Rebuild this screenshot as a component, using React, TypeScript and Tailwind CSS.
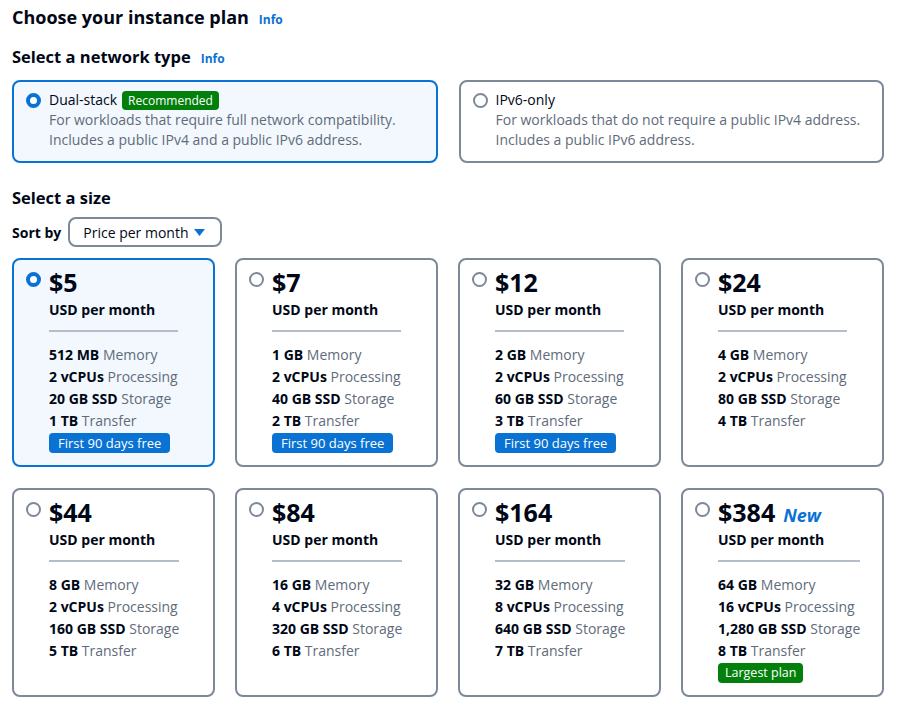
import React from "react";

type Plan = {
  price: string;
  mem: [string, string];
  cpu: string;
  ssd: string;
  tb: string;
  badge?: "free" | "largest";
  isNew?: boolean;
  selected?: boolean;
};

const plans: Plan[] = [
  { price: "$5", mem: ["512 MB", "Memory"], cpu: "2 vCPUs", ssd: "20 GB SSD", tb: "1 TB", badge: "free", selected: true },
  { price: "$7", mem: ["1 GB", "Memory"], cpu: "2 vCPUs", ssd: "40 GB SSD", tb: "2 TB", badge: "free" },
  { price: "$12", mem: ["2 GB", "Memory"], cpu: "2 vCPUs", ssd: "60 GB SSD", tb: "3 TB", badge: "free" },
  { price: "$24", mem: ["4 GB", "Memory"], cpu: "2 vCPUs", ssd: "80 GB SSD", tb: "4 TB" },
  { price: "$44", mem: ["8 GB", "Memory"], cpu: "2 vCPUs", ssd: "160 GB SSD", tb: "5 TB" },
  { price: "$84", mem: ["16 GB", "Memory"], cpu: "4 vCPUs", ssd: "320 GB SSD", tb: "6 TB" },
  { price: "$164", mem: ["32 GB", "Memory"], cpu: "8 vCPUs", ssd: "640 GB SSD", tb: "7 TB" },
  { price: "$384", mem: ["64 GB", "Memory"], cpu: "16 vCPUs", ssd: "1,280 GB SSD", tb: "8 TB", badge: "largest", isNew: true },
];

function Radio({ on }: { on?: boolean }) {
  return on ? (
    <span className="block w-[15px] h-[15px] rounded-full border-[4.5px] border-[#0972d3] bg-white shrink-0" />
  ) : (
    <span className="block w-[15px] h-[15px] rounded-full border-2 border-[#7d8998] bg-white shrink-0" />
  );
}

function Spec({ b, l }: { b: string; l: string }) {
  return (
    <div className="leading-[22px] whitespace-nowrap">
      <span className="font-bold text-[#000716]">{b}</span>{" "}
      <span className="text-[#5f6b7a]">{l}</span>
    </div>
  );
}

function PlanCard({ p }: { p: Plan }) {
  return (
    <div
      className={
        "flex gap-[8px] rounded-[8px] border-2 pl-[12px] pr-[10px] pt-[10px] pb-[12px] " +
        (p.selected ? "border-[#0972d3] bg-[#f2f8fd]" : "border-[#7d8998] bg-white")
      }
    >
      <div className="pt-[2px]">
        <Radio on={p.selected} />
      </div>
      <div className="inline-flex flex-col items-start">
        <div className="flex items-baseline gap-[8px] h-[28px] leading-[28px] -mt-[2px]">
          <span className="text-[25px] font-bold text-[#000716]">{p.price}</span>
          {p.isNew && <span className="text-[18px] font-bold italic text-[#0972d3] leading-[28px]">New</span>}
        </div>
        <div className="mt-[4px] text-[14px] font-bold leading-[20px] text-[#000716]">USD per month</div>
        <div className="self-stretch mt-[10px] h-[2px] bg-[#b4bdc9]" />
        <div className="mt-[12px] text-[14px]">
          <Spec b={p.mem[0]} l={p.mem[1]} />
          <Spec b={p.cpu} l="Processing" />
          <Spec b={p.ssd} l="Storage" />
          <Spec b={p.tb} l="Transfer" />
        </div>
        {p.badge === "free" && (
          <span className="mt-[1px] rounded-[4px] bg-[#0972d3] px-[9px] text-[13px] leading-[20px] text-white whitespace-nowrap">
            First 90 days free
          </span>
        )}
        {p.badge === "largest" && (
          <span className="mt-[1px] rounded-[4px] bg-[#037f0c] px-[7px] text-[12.5px] leading-[20px] text-white whitespace-nowrap">
            Largest plan
          </span>
        )}
      </div>
    </div>
  );
}

function Info() {
  return <span className="text-[12px] font-bold text-[#0972d3] ml-[10px]">Info</span>;
}

export default function App() {
  return (
    <div
      className="w-[903px] h-[718px] bg-white text-[#000716] px-[12px] overflow-hidden"
      style={{ fontFamily: '"Open Sans", "Noto Sans", Arial, sans-serif' }}
    >
      <div className="flex items-baseline pt-[3px] leading-[28px]">
        <h1 className="text-[18px] font-bold">Choose your instance plan</h1>
        <Info />
      </div>
      <div className="flex items-baseline mt-[11px] leading-[24px]">
        <h2 className="text-[16.5px] font-bold">Select a network type</h2>
        <Info />
      </div>
      <div className="mt-[9px] grid grid-cols-2 gap-[21px] w-[872px]">
        <div className="flex gap-[8px] rounded-[8px] border-2 border-[#0972d3] bg-[#f2f8fd] pl-[12px] pt-[8px] pb-[11px]">
          <div className="pt-[3px]">
            <Radio on />
          </div>
          <div className="text-[14px] leading-[20px]">
            <div className="flex items-center gap-[5px]">
              <span>Dual-stack</span>
              <span className="rounded-[4px] bg-[#037f0c] px-[6px] text-[12px] leading-[19px] text-white">Recommended</span>
            </div>
            <div className="text-[#5f6b7a]">For workloads that require full network compatibility.</div>
            <div className="text-[#5f6b7a]">Includes a public IPv4 and a public IPv6 address.</div>
          </div>
        </div>
        <div className="flex gap-[8px] rounded-[8px] border-2 border-[#7d8998] bg-white pl-[12px] pt-[8px] pb-[11px]">
          <div className="pt-[3px]">
            <Radio />
          </div>
          <div className="text-[14px] leading-[20px]">
            <div>IPv6-only</div>
            <div className="text-[#5f6b7a]">For workloads that do not require a public IPv4 address.</div>
            <div className="text-[#5f6b7a]">Includes a public IPv6 address.</div>
          </div>
        </div>
      </div>
      <h2 className="mt-[23px] text-[16.5px] font-bold leading-[24px]">Select a size</h2>
      <div className="mt-[7px] flex items-center gap-[7px]">
        <span className="text-[14px] font-bold">Sort by</span>
        <div className="flex items-center justify-between w-[154px] h-[30px] rounded-[8px] border-2 border-[#7d8998] pl-[13px] pr-[15px] text-[14px]">
          <span>Price per month</span>
          <svg width="11" height="7" viewBox="0 0 11 7">
            <path d="M0 0 L11 0 L5.5 7 Z" fill="#0972d3" />
          </svg>
        </div>
      </div>
      <div className="mt-[11px] grid grid-cols-4 gap-x-[20px] gap-y-[21px] w-[872px]">
        {plans.map((p) => (
          <PlanCard key={p.price} p={p} />
        ))}
      </div>
    </div>
  );
}
